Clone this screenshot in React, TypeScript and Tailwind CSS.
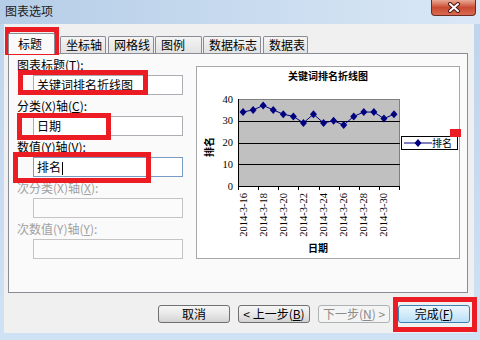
import React from 'react';

const values = [34, 35, 37, 35, 33, 32, 29, 33, 29, 30, 28, 32, 34, 34, 31, 33];

// plot area in chart-box coordinates
const PL = 42;
const PR = 203;
const PT = 33;
const PB = 120;
const step = (PR - PL) / values.length;
const px = (i: number) => PL + step * (i + 0.5);
const py = (v: number) => PB - (v / 40) * (PB - PT);

const cjk = "'Noto Sans CJK SC', sans-serif";
const serif = "'Liberation Serif', serif";

function Diamond({ x, y }: { x: number; y: number }) {
  return (
    <polygon
      points={`${x},${y - 4} ${x + 3.5},${y} ${x},${y + 4} ${x - 3.5},${y}`}
      fill="#000080"
    />
  );
}

function Chart() {
  const line = values.map((v, i) => `${px(i)},${py(v)}`).join(' ');
  const grid = [10, 20, 30].map((v) => Math.round(py(v)) + 0.5);
  return (
    <svg width="262" height="191" viewBox="1 1 262 191">
      <text x="132" y="14" textAnchor="middle" fontSize="10" fontWeight="bold" fontFamily={cjk}>
        关键词排名折线图
      </text>

      {/* plot area */}
      <rect x={PL + 0.5} y={PT + 0.5} width={PR - PL} height={PB - PT} fill="#c0c0c0" stroke="#808080" />
      {grid.map((y) => (
        <line key={y} x1={PL} x2={PR + 1} y1={y} y2={y} stroke="#000" />
      ))}
      <line x1={PL + 0.5} x2={PL + 0.5} y1={PT} y2={PB + 1} stroke="#000" />
      <line x1={PL} x2={PR + 1} y1={PB + 0.5} y2={PB + 0.5} stroke="#000" />

      {/* y axis */}
      {[0, 10, 20, 30, 40].map((v) => (
        <text key={v} x="37" y={py(v) + 3.5} textAnchor="end" fontSize="10.5" fontFamily={serif}>
          {v}
        </text>
      ))}
      <text
        x="14"
        y="81"
        textAnchor="middle"
        fontSize="10"
        fontWeight="bold"
        fontFamily={cjk}
        transform="rotate(-90 14 81)"
        dominantBaseline="middle"
      >
        排名
      </text>

      {/* x axis ticks + labels */}
      {Array.from({ length: 9 }, (_, k) => {
        const x = Math.round(PL + step * k * 2) + 0.5;
        return <line key={k} x1={x} x2={x} y1={PB} y2={PB + 4} stroke="#000" />;
      })}
      {Array.from({ length: 8 }, (_, k) => {
        const i = k * 2;
        const x = px(i) + 3.5;
        return (
          <text
            key={i}
            x={x}
            y="127"
            textAnchor="end"
            fontSize="10.5"
            fontFamily={serif}
            transform={`rotate(-90 ${x} 127)`}
          >
            {`2014-3-${16 + i}`}
          </text>
        );
      })}
      <text x="122" y="186" textAnchor="middle" fontSize="10" fontWeight="bold" fontFamily={cjk}>
        日期
      </text>

      {/* series */}
      <polyline points={line} fill="none" stroke="#000080" strokeWidth="1" />
      {values.map((v, i) => (
        <Diamond key={i} x={px(i)} y={py(v)} />
      ))}

      {/* legend */}
      <rect x="205.5" y="70.5" width="56" height="13" fill="#fff" stroke="#000" />
      <line x1="208" x2="236" y1="77" y2="77" stroke="#000080" />
      <Diamond x={222} y={77} />
      <text x="236" y="81" fontSize="10" fontFamily={cjk}>
        排名
      </text>
    </svg>
  );
}

function Field({
  before,
  keyChar,
  value,
  focused,
  disabled,
}: {
  before: string;
  keyChar: string;
  value?: string;
  focused?: boolean;
  disabled?: boolean;
}) {
  return (
    <div className="flex flex-col">
      <div className={`h-[15px] leading-[15px] whitespace-nowrap ${disabled ? 'text-[#a0a0a0]' : 'text-black'}`}>
        {before}
        <span className="underline">{keyChar}</span>):
      </div>
      <div
        className={`mt-[3px] ml-[16px] w-[150px] h-[20px] border pl-[3px] leading-[18px] whitespace-nowrap ${
          disabled
            ? 'border-[#c4c4c4] bg-[#fbfbfb]'
            : focused
              ? 'border-[#7a9cc4] bg-white'
              : 'border-[#abadb3] bg-white'
        }`}
      >
        {value}
        {focused && <span className="inline-block w-px h-[13px] bg-black align-middle ml-[1px]" />}
      </div>
    </div>
  );
}

function Tab({ label, className = '' }: { label: string; className?: string }) {
  return (
    <div
      className={`h-[17px] border border-b-0 border-[#898c95] rounded-t-[2px] bg-gradient-to-b from-[#f4f4f4] to-[#e2e2e2] pl-[5px] leading-[16px] whitespace-nowrap ${className}`}
    >
      {label}
    </div>
  );
}

function Button({
  children,
  variant = 'normal',
}: {
  children: React.ReactNode;
  variant?: 'normal' | 'disabled' | 'default';
}) {
  const look =
    variant === 'disabled'
      ? 'border-[#adb2b5] bg-[#f4f4f4] text-[#8a8a8a]'
      : variant === 'default'
        ? 'border-[#3c7fb1] bg-gradient-to-b from-[#ecf6fc] via-[#d4ecfb] to-[#b9dff7] text-black'
        : 'border-[#707070] bg-gradient-to-b from-[#f6f6f6] via-[#e8e8e8] to-[#d3d3d3] text-black';
  return (
    <div className={`w-[72px] h-[18px] border rounded-[3px] flex items-center justify-center leading-[16px] whitespace-nowrap ${look}`}>
      {children}
    </div>
  );
}

export default function App() {
  return (
    <div className="relative w-[480px] h-[340px] overflow-hidden flex flex-col bg-gradient-to-b from-[#bdd4ed] to-[#cfe2f5] font-['Noto_Sans_CJK_SC',sans-serif] text-[12px] text-black">
      {/* title bar */}
      <div className="h-[24px] flex items-start justify-between bg-gradient-to-r from-[#b5cde7] to-[#dae8f6]">
        <div className="pl-[5px] pt-[3px] leading-[16px] text-[#1b1b1b]">图表选项</div>
        <div className="mr-[4px] w-[45px] h-[16px] border border-t-0 border-[#6a2c22] rounded-b-[4px] bg-gradient-to-b from-[#e8a895] via-[#c94a32] to-[#d76b50] flex items-center justify-center">
          <svg width="14" height="11" viewBox="0 0 14 11">
            <path d="M3 2 L11 9 M11 2 L3 9" stroke="#4a1810" strokeWidth="4" strokeLinecap="round" />
            <path d="M3 2 L11 9 M11 2 L3 9" stroke="#fff" strokeWidth="2" strokeLinecap="round" />
          </svg>
        </div>
      </div>

      {/* client area */}
      <div className="ml-[4px] mr-[6px] h-[309px] bg-[#f0f0f0] px-[4px] pt-[9px] flex flex-col">
        {/* tabs */}
        <div className="h-[20px] flex items-end">
          <div className="relative z-10 w-[47px] h-[21px] -mb-[1px] border border-b-0 border-[#898c95] rounded-t-[2px] bg-[#fafafa] pl-[9px] pt-[2px] leading-[16px]">
            标题
          </div>
          <Tab label="坐标轴" className="ml-[5px] w-[46px]" />
          <Tab label="网格线" className="ml-[2px] w-[46px]" />
          <Tab label="图例" className="ml-[1px] w-[47px]" />
          <Tab label="数据标志" className="ml-[1px] w-[58px]" />
          <Tab label="数据表" className="ml-[2px] w-[45px]" />
        </div>

        {/* panel */}
        <div className="mr-[2px] h-[240px] border border-[#898c95] bg-[#fafafa] flex items-start pl-[8px] pt-[3px]">
          <div className="w-[166px] flex flex-col gap-[3px]">
            <Field before="图表标题(" keyChar="T" value="关键词排名折线图" />
            <Field before="分类(X)轴(" keyChar="C" value="日期" />
            <Field before="数值(Y)轴(" keyChar="V" value="排名" focused />
            <Field before="次分类(X)轴(" keyChar="X" disabled />
            <Field before="次数值(Y)轴(" keyChar="Y" disabled />
          </div>
          <div className="ml-[13px] mt-[9px] w-[264px] h-[193px] border border-[#a8a8a8] bg-white">
            <Chart />
          </div>
        </div>

        {/* buttons */}
        <div className="mt-[12px] h-[18px] flex justify-end gap-[8px]">
          <Button>取消</Button>
          <Button>
            &lt; 上一步(<span className="underline">B</span>)
          </Button>
          <Button variant="disabled">
            下一步(<span className="underline">N</span>) &gt;
          </Button>
          <Button variant="default">
            完成(<span className="underline">F</span>)
          </Button>
        </div>
      </div>

      {/* red annotation boxes */}
      <div className="absolute left-[5px] top-[27px] w-[54px] h-[28px] border-[5px] border-[#ec1c24]" />
      <div className="absolute left-[18px] top-[70px] w-[130px] h-[25px] border-[5px] border-[#ec1c24]" />
      <div className="absolute left-[17px] top-[113px] w-[94px] h-[27px] border-[5px] border-[#ec1c24]" />
      <div className="absolute left-[13px] top-[152px] w-[138px] h-[31px] border-[5px] border-[#ec1c24]" />
      <div className="absolute left-[393px] top-[297px] w-[84px] h-[35px] border-[5px] border-[#ec1c24]" />
      <div className="absolute left-[450px] top-[129px] w-[11px] h-[8px] bg-[#ec1c24]" />
    </div>
  );
}
